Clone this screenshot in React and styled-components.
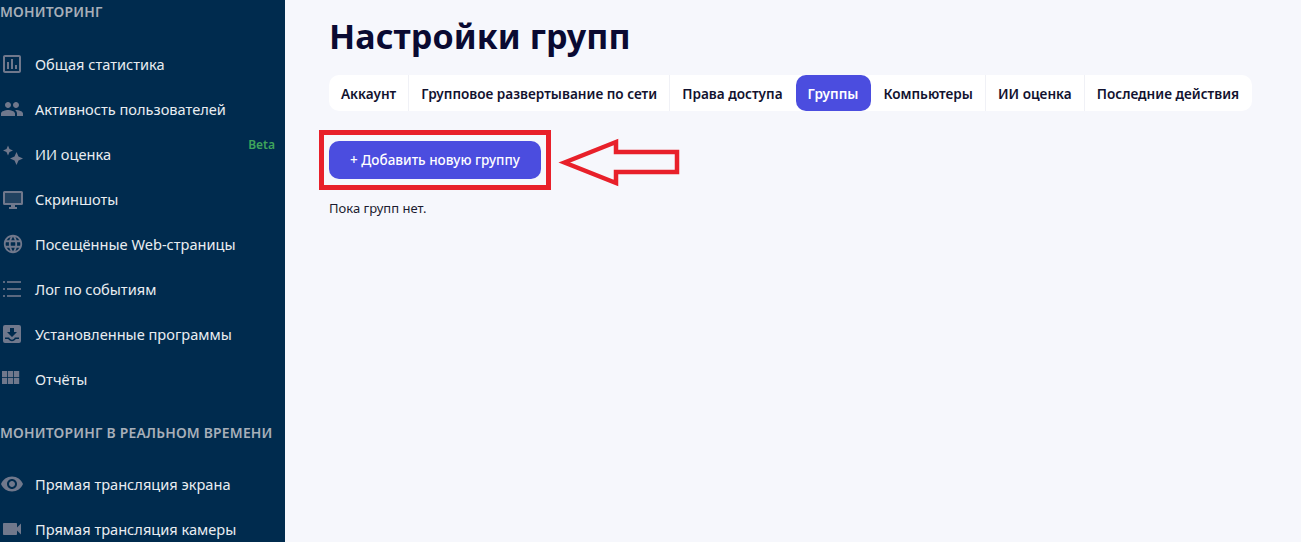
import React from 'react';
import styled, { createGlobalStyle } from 'styled-components';
import {
  MdOutlineAssessment,
  MdPeople,
  MdLanguage,
  MdRemoveRedEye,
  MdVideocam,
} from 'react-icons/md';

const FONT = '"Noto Sans", "Open Sans", sans-serif';

const GlobalStyle = createGlobalStyle`
  html, body {
    margin: 0;
    height: 100%;
    background: #f6f7fc;
    font-family: ${FONT};
  }
`;

const Page = styled.div`
  display: flex;
  height: 100vh;
  overflow: hidden;
`;

const Sidebar = styled.aside`
  width: 285px;
  flex-shrink: 0;
  background: #002b4e;
  overflow: hidden;
`;

const SectionLabel = styled.div`
  height: 24px;
  line-height: 24px;
  margin: ${(p) => p.$margin};
  font-size: 13.9px;
  font-weight: 600;
  letter-spacing: 0.2px;
  color: #a7afb9;
  white-space: nowrap;
`;

const NavItem = styled.div`
  position: relative;
  display: flex;
  align-items: center;
  height: 45px;
  color: #e9edf1;
  font-size: 14.6px;
  white-space: nowrap;
`;

const NavIcon = styled.span`
  width: 35px;
  flex-shrink: 0;
  display: flex;
  align-items: center;
  padding-left: ${(p) => p.$inset || 0}px;
  box-sizing: border-box;
  color: #70788c;
  font-size: ${(p) => p.$size || 24}px;
`;

const BetaTag = styled.span`
  position: absolute;
  right: 10px;
  top: 5px;
  font-size: 12px;
  font-weight: 600;
  color: #3fa45b;
`;

const Main = styled.main`
  flex: 1;
  min-width: 0;
  padding: 12px 50px 0 44px;
`;

const Title = styled.h1`
  margin: 0 0 15px;
  font-size: 34px;
  line-height: 48px;
  font-weight: 700;
  letter-spacing: 0.1px;
  color: #0a0a32;
`;

const Tabs = styled.div`
  display: flex;
  height: 36px;
  width: fit-content;
  background: #fff;
  border-radius: 10px;
`;

const Tab = styled.div`
  display: flex;
  align-items: center;
  padding: 0 12px;
  font-size: 13.6px;
  font-weight: 600;
  white-space: nowrap;
  border-radius: ${(p) => (p.$active ? '10px' : '0')};
  background: ${(p) => (p.$active ? '#4b4ddf' : 'transparent')};
  color: ${(p) => (p.$active ? '#fff' : '#12122f')};
  border-right: 1px solid ${(p) => (p.$active || p.$last ? 'transparent' : '#f0f1f6')};
`;

const ButtonRow = styled.div`
  position: relative;
  width: fit-content;
  margin-top: 30px;
`;

const AddButton = styled.button`
  display: block;
  width: 212px;
  height: 38px;
  border: 0;
  border-radius: 10px;
  background: #4b4ddf;
  color: #fff;
  font-family: inherit;
  font-size: 13.5px;
  font-weight: 500;
`;

const RedFrame = styled.div`
  position: absolute;
  inset: -11px -10px;
  border: 5px solid #e8202a;
`;

const Arrow = styled.svg`
  position: absolute;
  left: 229px;
  top: -4px;
`;

const EmptyText = styled.p`
  margin: 21px 0 0;
  font-size: 13px;
  line-height: 16px;
  color: #1b1b2f;
`;

const Sparkle = () => (
  <svg width="24" height="22" viewBox="0 0 24 22" fill="currentColor">
    <path d="M8 2.5 L9.5 6 L13 7.5 L9.5 9 L8 12.5 L6.5 9 L3 7.5 L6.5 6 Z" />
    <path d="M16.5 9 L18.5 13.5 L23 15.5 L18.5 17.5 L16.5 22 L14.5 17.5 L10 15.5 L14.5 13.5 Z" />
  </svg>
);

const MonitorIcon = () => (
  <svg width="24" height="24" viewBox="0 0 24 24" fill="currentColor">
    <rect x="4" y="5" width="18" height="12" opacity="0.3" />
    <path
      fillRule="evenodd"
      d="M4.5 4h17A1.5 1.5 0 0 1 23 5.5v11a1.5 1.5 0 0 1-1.5 1.5H15v2h2v2H9v-2h2v-2H4.5A1.5 1.5 0 0 1 3 16.5v-11A1.5 1.5 0 0 1 4.5 4z
         M5 6v10h16V6z"
    />
  </svg>
);

const ListIcon = () => (
  <svg width="24" height="22" viewBox="0 0 24 22" fill="currentColor">
    <rect x="3" y="3.2" width="2" height="1.6" />
    <rect x="7" y="3.2" width="14" height="1.6" />
    <rect x="3" y="10.2" width="2" height="1.6" />
    <rect x="7" y="10.2" width="14" height="1.6" />
    <rect x="3" y="17.2" width="2" height="1.6" />
    <rect x="7" y="17.2" width="14" height="1.6" />
  </svg>
);

const InboxIcon = () => (
  <svg width="24" height="24" viewBox="0 0 24 24" fill="currentColor">
    <path
      fillRule="evenodd"
      d="M5 3h14a2 2 0 0 1 2 2v14a2 2 0 0 1-2 2H5a2 2 0 0 1-2-2V5a2 2 0 0 1 2-2z
         M10 6h4v4h3l-5 5-5-5h3z
         M5 15.5h4.2c.4 1.3 1.5 2.2 2.8 2.2s2.4-.9 2.8-2.2H19V17h-3.2c-.7 1.2-2.2 2.2-3.8 2.2S8.9 18.2 8.2 17H5z"
    />
  </svg>
);

const GridIcon = () => (
  <svg width="24" height="22" viewBox="0 0 24 22" fill="currentColor">
    <rect x="2" y="3" width="5.2" height="6" />
    <rect x="8" y="3" width="5.2" height="6" />
    <rect x="14" y="3" width="5.2" height="6" />
    <rect x="2" y="9.8" width="5.2" height="6.2" />
    <rect x="8" y="9.8" width="5.2" height="6.2" />
    <rect x="14" y="9.8" width="5.2" height="6.2" />
  </svg>
);

const firstGroup = [
  { icon: <MdOutlineAssessment />, label: 'Общая статистика' },
  { icon: <MdPeople />, label: 'Активность пользователей' },
  { icon: <Sparkle />, label: 'ИИ оценка', beta: true },
  { icon: <MonitorIcon />, label: 'Скриншоты' },
  { icon: <MdLanguage />, size: 22, inset: 2, label: 'Посещённые Web-страницы' },
  { icon: <ListIcon />, label: 'Лог по событиям' },
  { icon: <InboxIcon />, label: 'Установленные программы' },
  { icon: <GridIcon />, label: 'Отчёты' },
];

const secondGroup = [
  { icon: <MdRemoveRedEye />, label: 'Прямая трансляция экрана' },
  { icon: <MdVideocam />, label: 'Прямая трансляция камеры' },
];

const tabs = [
  'Аккаунт',
  'Групповое развертывание по сети',
  'Права доступа',
  'Группы',
  'Компьютеры',
  'ИИ оценка',
  'Последние действия',
];

const renderItem = (item) => (
  <NavItem key={item.label}>
    <NavIcon $size={item.size} $inset={item.inset}>{item.icon}</NavIcon>
    {item.label}
    {item.beta && <BetaTag>Beta</BetaTag>}
  </NavItem>
);

const App = () => (
  <Page>
    <GlobalStyle />
    <Sidebar>
      <SectionLabel $margin="0 0 17px">МОНИТОРИНГ</SectionLabel>
      {firstGroup.map(renderItem)}
      <SectionLabel $margin="20px 0 16px">МОНИТОРИНГ В РЕАЛЬНОМ ВРЕМЕНИ</SectionLabel>
      {secondGroup.map(renderItem)}
    </Sidebar>
    <Main>
      <Title>Настройки групп</Title>
      <Tabs>
        {tabs.map((t, i) => (
          <Tab key={t} $active={t === 'Группы'} $last={i === tabs.length - 1 || tabs[i + 1] === 'Группы'}>
            {t}
          </Tab>
        ))}
      </Tabs>
      <ButtonRow>
        <AddButton>+ Добавить новую группу</AddButton>
        <RedFrame />
        <Arrow width="124" height="54" viewBox="0 0 124 54">
          <path
            d="M6.5 25.5 L58 5 L58 15 L119 15 L119 35 L58 35 L58 46 Z"
            fill="none"
            stroke="#e8202a"
            strokeWidth="4.5"
          />
        </Arrow>
      </ButtonRow>
      <EmptyText>Пока групп нет.</EmptyText>
    </Main>
  </Page>
);

export default App;
